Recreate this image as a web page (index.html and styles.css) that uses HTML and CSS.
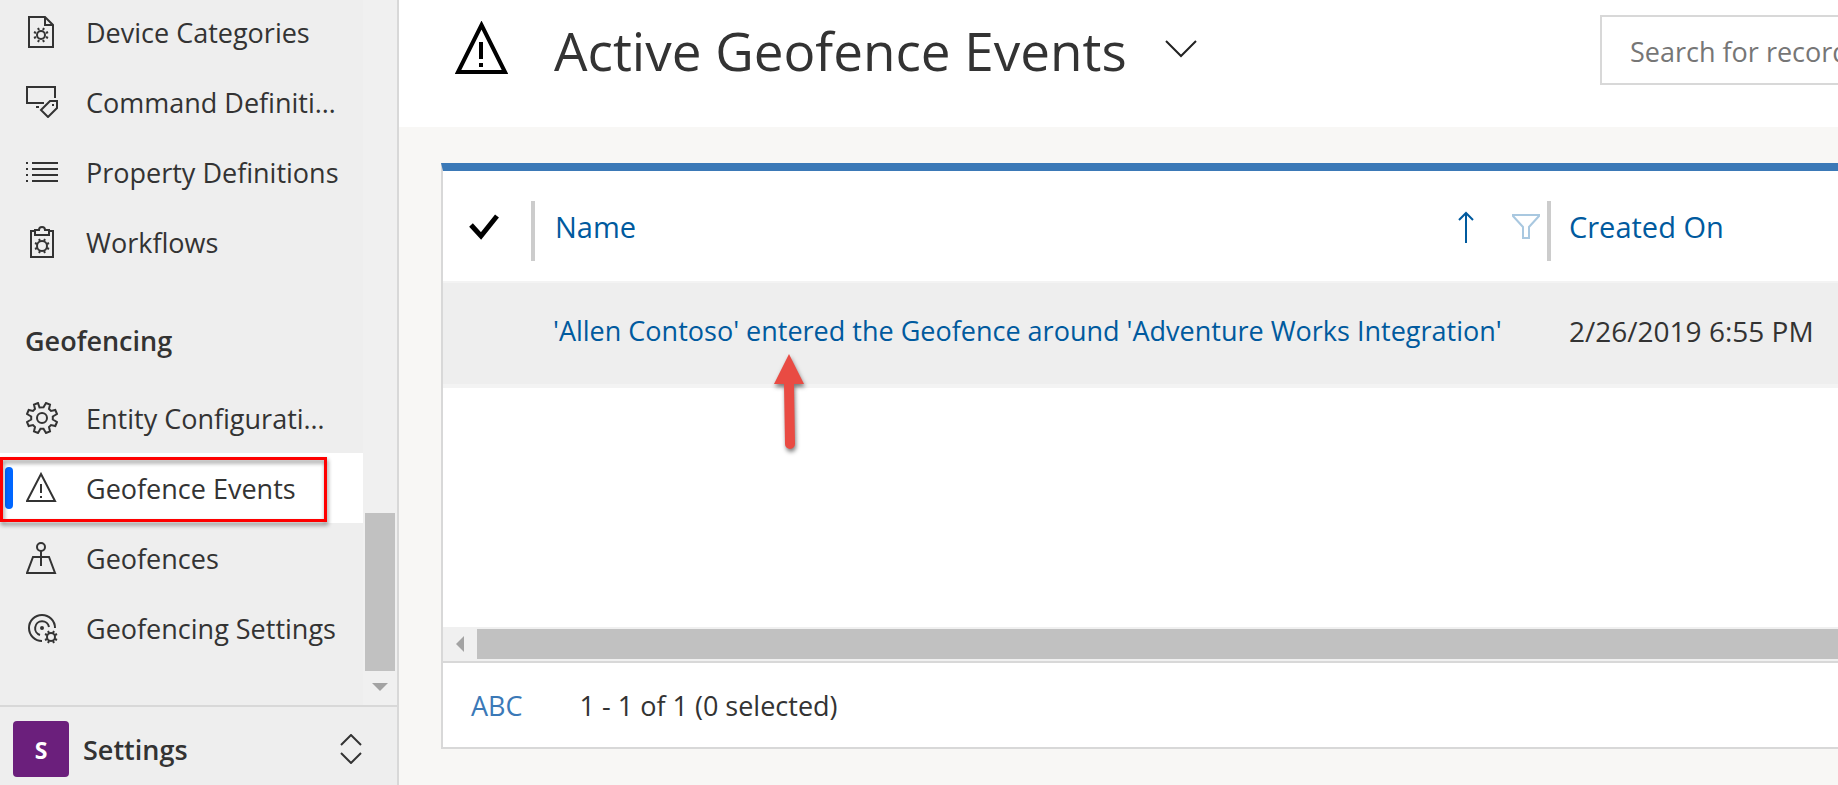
FILE: index.html
```html
<!DOCTYPE html>
<html lang="en">
<head>
<meta charset="utf-8">
<title>Active Geofence Events</title>
<link rel="stylesheet" href="styles.css">
</head>
<body>
<div class="app">
  <aside class="sidebar">
    <div class="nav-area">
      <nav class="nav">
        <a class="nav-item" href="#"><svg class="icon" viewBox="0 0 32 32"><path d="M3 1h16l8 8v22H3zM19 1v8h8"/><circle cx="15" cy="19" r="4"/><path d="M17 14l1-2M13 14l-1-2M13 24l-1 2M17 24l1 2M10 17l-2-1M20 17l2-1M10 21l-2 1M20 21l2 1"/></svg><span>Device Categories</span></a>
        <a class="nav-item" href="#"><svg class="icon" viewBox="0 0 32 32"><path d="M18 17H1V1h28v11M10 21h3"/><path d="M15 24l9-9h7v7l-9 9z"/><path d="M26 19h2"/></svg><span>Command Definiti…</span></a>
        <a class="nav-item" href="#"><svg class="icon" viewBox="0 0 32 32"><path d="M0 7h2M6 7h26M0 13h2M6 13h26M0 19h2M6 19h26M0 25h2M6 25h26"/></svg><span>Property Definitions</span></a>
        <a class="nav-item" href="#"><svg class="icon" viewBox="0 0 32 32"><path d="M10 5H5v26h22V5h-5"/><path d="M9 4h4c0-4 6-4 6 0h4v5H9z"/><circle cx="16" cy="20" r="5"/><path d="M18 15l1-2M14 15l-1-2M14 25l-1 2M18 25l1 2M11 18l-2-1M21 18l2-1M11 22l-2 1M21 22l2 1"/></svg><span>Workflows</span></a>
        <h2 class="nav-heading">Geofencing</h2>
        <a class="nav-item" href="#"><svg class="icon" viewBox="0 0 32 32"><circle cx="16" cy="16" r="5"/><path d="M13.5 5.5L12 1L8 2.700L9 7L7 9L2.700 8L1 12L5.200 14.500V17.500L1 20L2.700 24L7 23L9 25L8 29.300L12 31L14.500 26.800H17.500L20 31L24 29.300L23 25L25 23L29.300 24L31 20L26.800 17.500V14.500L31 12L29.300 8L25 9L23 7L24 2.700L20 1L17.500 5.200z"/></svg><span>Entity Configurati…</span></a>
        <a class="nav-item active" href="#"><svg class="icon" viewBox="0 0 32 32"><path d="M15 2L29 29H1z"/><path d="M15 12v9M15 24v2"/></svg><span>Geofence Events</span></a>
        <a class="nav-item" href="#"><svg class="icon" viewBox="0 0 32 32"><circle cx="15" cy="5" r="4"/><path d="M15 9v15M11 15H7L1 31h28l-6-16h-4M7 15h16"/></svg><span>Geofences</span></a>
        <a class="nav-item" href="#"><svg class="icon" viewBox="0 0 32 32"><path d="M16 29A13 13 0 1 1 29 16"/><path d="M14 23A7 7 0 1 1 23 15"/><circle class="dot" cx="16" cy="16" r="1"/><circle cx="25" cy="25" r="4"/><path d="M27 21l1-2M23 21l-1-2M23 29l-1 2M27 29l1 2M21 23l-2-1M29 23l2-1M21 27l-2 1M29 27l2 1"/></svg><span>Geofencing Settings</span></a>
      </nav>
      <div class="vscroll"><div class="vthumb"></div><svg class="vdown" viewBox="0 0 16 8"><path d="M0 0h16L8 8z"/></svg></div>
    </div>
    <button class="area-switch" type="button">
      <span class="area-badge">S</span>
      <span class="area-name">Settings</span>
      <svg class="area-chevron" viewBox="0 0 22 30"><path d="M1 11L11 1l10 10M1 19l10 10 10-10"/></svg>
    </button>
  </aside>
  <main class="main">
    <header class="page-header">
      <svg class="page-icon" viewBox="0 0 53 53"><path d="M26.500 4L50 51H3z"/><path d="M26 21v17M26 42v4"/></svg>
      <h1 class="page-title">Active Geofence Events</h1>
      <button class="view-picker" type="button" aria-label="Select view"><svg viewBox="0 0 32 18"><path d="M1 1l15 15L31 1"/></svg></button>
      <input class="search" type="text" placeholder="Search for records" aria-label="Search for records">
    </header>
    <div class="content">
      <section class="panel">
        <table class="grid">
          <colgroup><col class="col-check"><col><col class="col-date"></colgroup>
          <thead>
            <tr>
              <th><div class="head head-check"><button type="button" aria-label="Select all"><svg class="check" viewBox="0 0 30 26"><path d="M2 11l10 11L28 2"/></svg></button></div></th>
              <th><div class="head head-name"><button class="head-label" type="button">Name</button><svg class="sort" viewBox="0 0 16 32"><path d="M8 32V2M1 9l7-7 7 7"/></svg><button type="button" aria-label="Filter by name"><svg class="filter" viewBox="0 0 28 26"><path d="M1 1h26v1L17 13v11h-6V13L1 2z"/></svg></button></div></th>
              <th><div class="head head-date"><button type="button">Created On</button></div></th>
            </tr>
          </thead>
          <tbody>
            <tr>
              <td></td>
              <td class="cell-name"><a href="#">'Allen Contoso' entered the Geofence around 'Adventure Works Integration'</a><svg class="pointer" viewBox="0 0 44 108"><path d="M22 4l15 30H27l1 60a5 5 0 0 1-10 0L17 34H7z"/></svg></td>
              <td class="cell-date">2/26/2019 6:55 PM</td>
            </tr>
          </tbody>
        </table>
        <div class="hscroll"><svg class="hleft" viewBox="0 0 8 16"><path d="M8 0v16L0 8z"/></svg><div class="hthumb"></div></div>
        <footer class="panel-footer"><button class="jump" type="button">ABC</button><span>1 - 1 of 1 (0 selected)</span></footer>
      </section>
    </div>
  </main>
</div>
</body>
</html>
```
FILE: styles.css
```css
*, *::before, *::after { box-sizing: border-box; }
body {
  margin: 0;
  font-family: "Open Sans", "Noto Sans", sans-serif;
  font-size: 27px;
  line-height: 40px;
  color: #333;
}
button {
  margin: 0;
  padding: 0;
  border: 0;
  background: none;
  font: inherit;
  color: inherit;
  text-align: left;
}
svg { display: block; fill: none; }
a { color: inherit; text-decoration: none; }
.app { display: flex; height: 100vh; overflow: hidden; }

.sidebar {
  flex: none;
  display: flex;
  flex-direction: column;
  width: 399px;
  background: #eee;
  border-right: 2px solid #d8d8d8;
}
.nav-area {
  flex: 1;
  display: flex;
  min-height: 0;
  border-bottom: 2px solid #d8d8d8;
}
.nav {
  flex: 1;
  display: flex;
  flex-direction: column;
  justify-content: flex-end;
  padding-bottom: 42px;
}
.nav-item {
  flex: none;
  position: relative;
  display: flex;
  align-items: center;
  gap: 28px;
  height: 70px;
  padding-left: 26px;
  white-space: nowrap;
}
.nav-item span { padding-top: 2px; }
.icon { flex: none; width: 32px; height: 32px; stroke: #333; stroke-width: 2; }
.icon .dot { fill: #333; }
.nav-heading {
  flex: none;
  margin: 0;
  padding: 44px 25px 22px;
  font-size: 27px;
  font-weight: 600;
}
.nav-item.active { background: #fff; }
.nav-item.active::before {
  content: "";
  position: absolute;
  left: 5px;
  top: 14px;
  width: 8px;
  height: 42px;
  border-radius: 4px;
  background: #0066ff;
}
.nav-item.active::after {
  content: "";
  position: absolute;
  left: 0;
  top: 4px;
  width: 327px;
  height: 65px;
  border: 3px solid #fe0000;
  filter: drop-shadow(1px 3px 2px rgba(0, 0, 0, .45));
}
.vscroll {
  flex: none;
  display: flex;
  flex-direction: column;
  align-items: center;
  justify-content: flex-end;
  gap: 12px;
  width: 34px;
  padding-bottom: 14px;
  background: #f0f0f0;
}
.vthumb { width: 30px; height: 158px; background: #c1c1c1; }
.vdown { width: 16px; height: 8px; fill: #a3a3a3; }

.area-switch {
  flex: none;
  display: flex;
  align-items: center;
  height: 78px;
  padding: 6px 35px 0 13px;
}
.area-badge {
  width: 56px;
  height: 56px;
  border-radius: 4px;
  background: #6b1f7c;
  color: #fff;
  font-size: 23px;
  font-weight: 700;
  line-height: 58px;
  text-align: center;
}
.area-name { flex: 1; padding: 2px 0 0 14px; font-weight: 600; }
.area-chevron { width: 22px; height: 30px; stroke: #333; stroke-width: 2; }

.main { flex: 1; display: flex; flex-direction: column; min-width: 0; background: #f8f7f5; }
.page-header {
  flex: none;
  display: flex;
  align-items: center;
  height: 127px;
  padding: 0 0 27px 56px;
  background: #fff;
}
.page-icon { flex: none; width: 53px; height: 53px; margin-bottom: 6px; stroke: #000; stroke-width: 4; }
.page-title {
  margin: 0;
  padding: 2px 0 0 46px;
  font-size: 53px;
  font-weight: 400;
  line-height: 72px;
  white-space: nowrap;
}
.view-picker { flex: 1; padding: 0 0 2px 38px; }
.view-picker svg { width: 32px; height: 18px; stroke: #222; stroke-width: 2; }
.search {
  flex: none;
  width: 238px;
  height: 70px;
  padding: 2px 0 0 28px;
  border: 2px solid #d8d8d8;
  border-right: 0;
  border-radius: 0;
  outline: 0;
  background: #fff;
  font: inherit;
}
.search::placeholder { color: #767676; opacity: 1; }

.content { flex: 1; display: flex; min-height: 0; padding: 36px 0 36px 42px; }
.panel {
  flex: 1;
  display: flex;
  flex-direction: column;
  min-width: 0;
  background: #fff;
  border: 2px solid #d8d8d8;
  border-top: 8px solid #3b79b7;
  border-right: 0;
}
.grid { width: 100%; table-layout: fixed; border-collapse: collapse; white-space: nowrap; }
.col-check { width: 92px; }
.col-date { width: 287px; }
.grid th { padding: 30px 0 20px; font-weight: 400; }
.grid td { height: 104px; padding: 0; }
.head {
  display: flex;
  align-items: center;
  height: 60px;
  padding-bottom: 8px;
  border-right: 4px solid #ccc;
  color: #005a9e;
  font-size: 29px;
}
.head-check { padding-left: 26px; }
.check { width: 30px; height: 26px; stroke: #000; stroke-width: 5; }
.head-name { padding-left: 20px; padding-right: 7px; }
.head-label { flex: 1; }
.sort { width: 16px; height: 32px; margin-right: 38px; stroke: #005a9e; stroke-width: 2; }
.filter { width: 28px; height: 26px; stroke: #a9c8e0; stroke-width: 2; }
.head-date { padding-left: 18px; border-right: 0; }
.grid tbody tr { background: #eee; border-top: 2px solid #f3f3f3; border-bottom: 4px solid #f3f3f3; }
.grid .cell-name { position: relative; padding: 0 0 6px 18px; color: #005a9e; }
.grid .cell-date { padding: 0 0 6px 18px; font-size: 28px; }
.pointer {
  position: absolute;
  left: 232px;
  top: 67px;
  width: 44px;
  height: 108px;
  fill: #e94b43;
  filter: drop-shadow(1px 3px 2px rgba(0, 0, 0, .5));
}
.hscroll {
  display: flex;
  align-items: center;
  gap: 13px;
  height: 34px;
  margin-top: auto;
  padding-left: 13px;
  background: #f0f0f0;
}
.hleft { flex: none; width: 8px; height: 16px; fill: #a3a3a3; }
.hthumb { flex: 1; height: 30px; background: #c1c1c1; }
.panel-footer {
  display: flex;
  align-items: center;
  gap: 57px;
  height: 86px;
  padding: 2px 0 0 28px;
  border-top: 2px solid #d8d8d8;
}
.jump { color: #3b79b7; }
```
